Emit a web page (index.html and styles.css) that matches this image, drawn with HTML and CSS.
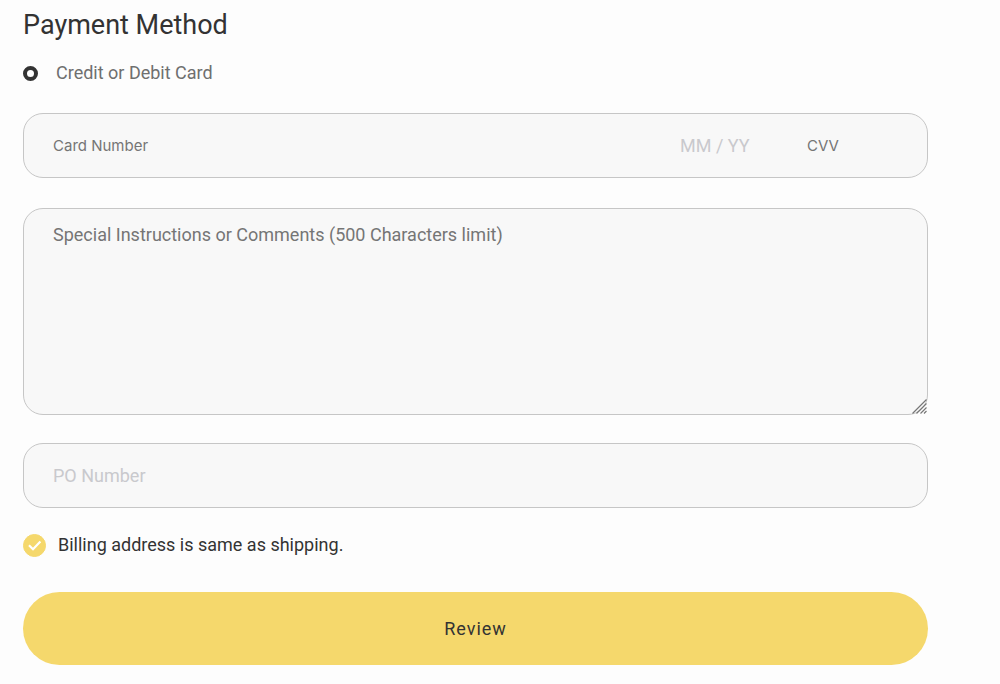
FILE: index.html
```html
<!DOCTYPE html>
<html lang="en">
<head>
    <meta charset="utf-8">
    <title>Payment Method</title>
    <link rel="stylesheet" href="styles.css">
</head>
<body>
<form class="payment" action="#">
    <h1 class="title">Payment Method</h1>

    <label class="method">
        <input type="radio" name="method" class="radio" checked>
        <span>Credit or Debit Card</span>
    </label>

    <div class="field card">
        <input type="text" class="card-number" placeholder="Card Number" aria-label="Card Number">
        <input type="text" class="card-date" placeholder="MM / YY" aria-label="Expiration date">
        <input type="text" class="card-cvv" placeholder="CVV" aria-label="CVV">
    </div>

    <div class="comments">
        <textarea class="field" placeholder="Special Instructions or Comments (500 Characters limit)" maxlength="500" aria-label="Special Instructions or Comments"></textarea>
        <svg class="grip" width="15" height="15" viewBox="0 0 15 15" aria-hidden="true">
            <path d="M0.5 14.5L14.5 0.5M4.5 14.5L14.5 4.5M8.5 14.5L14.5 8.5M12 14.5L14.5 12"/>
        </svg>
    </div>

    <input type="text" class="field po" placeholder="PO Number" aria-label="PO Number">

    <label class="billing">
        <input type="checkbox" class="check" checked>
        <svg class="tick" width="23" height="23" viewBox="0 0 23 23" aria-hidden="true">
            <path d="M6 11.2L10 15.2L17.4 7.4"/>
        </svg>
        <span>Billing address is same as shipping.</span>
    </label>

    <button type="submit" class="review">Review</button>
</form>
</body>
</html>
```

FILE: styles.css
```css
* {
    box-sizing: border-box;
    margin: 0;
    padding: 0;
}

body {
    background-color: #fdfdfd;
    color: #333;
    font: 18px/24px Roboto, sans-serif;
}

input, textarea, button {
    font: inherit;
    color: inherit;
}

.payment {
    display: flex;
    flex-direction: column;
    padding: 9px 72px 19px 23px;
}

.title {
    font-size: 27px;
    font-weight: 400;
    line-height: 32px;
}

.method {
    display: flex;
    align-items: center;
    gap: 18px;
    margin-top: 20px;
    color: #6f6f6f;
}

.radio {
    appearance: none;
    width: 15px;
    height: 15px;
    border: 4px solid #333;
    border-radius: 50%;
    background-color: #fff;
}

.field {
    width: 100%;
    border: 1px solid #c6c6c6;
    border-radius: 20px;
    background-color: #f8f8f8;
    outline: none;
}

.card {
    display: flex;
    align-items: center;
    height: 65px;
    margin-top: 28px;
    padding: 0 29px;
}

.card input {
    min-width: 0;
    border: none;
    background: none;
    outline: none;
}

.card .card-number {
    flex: 1;
    font: 15px/24px Inter, sans-serif;
}

.card .card-date {
    width: 127px;
}

.card .card-cvv {
    width: 91px;
    font: 15px/24px Inter, sans-serif;
}

::placeholder {
    color: #757575;
    opacity: 1;
}

.card-date::placeholder, .po::placeholder {
    color: #c9c9cd;
}

.comments {
    position: relative;
    margin-top: 30px;
}

.comments textarea {
    display: block;
    height: 207px;
    padding: 14px 29px;
    resize: vertical;
}

.comments textarea::-webkit-resizer {
    background: transparent;
}

/* drag handle lines, drawn over the textarea corner */
.grip {
    position: absolute;
    right: 1px;
    bottom: 1px;
    fill: none;
    stroke: #777;
    stroke-width: 1.2;
    pointer-events: none;
}

.po {
    height: 65px;
    margin-top: 28px;
    padding: 0 29px;
}

.billing {
    position: relative;
    display: flex;
    align-items: center;
    gap: 12px;
    margin-top: 25px;
}

.check {
    appearance: none;
    width: 23px;
    height: 23px;
    border: 1px solid #f5d86c;
    border-radius: 50%;
}

.check:checked {
    background-color: #f5d86c;
}

.tick {
    position: absolute;
    left: 0;
    fill: none;
    stroke: #fff;
    stroke-width: 2.2;
    pointer-events: none;
}

.review {
    height: 73px;
    margin-top: 35px;
    border: none;
    border-radius: 37px;
    background-color: #f5d86c;
    letter-spacing: 1px;
    cursor: pointer;
}
```
